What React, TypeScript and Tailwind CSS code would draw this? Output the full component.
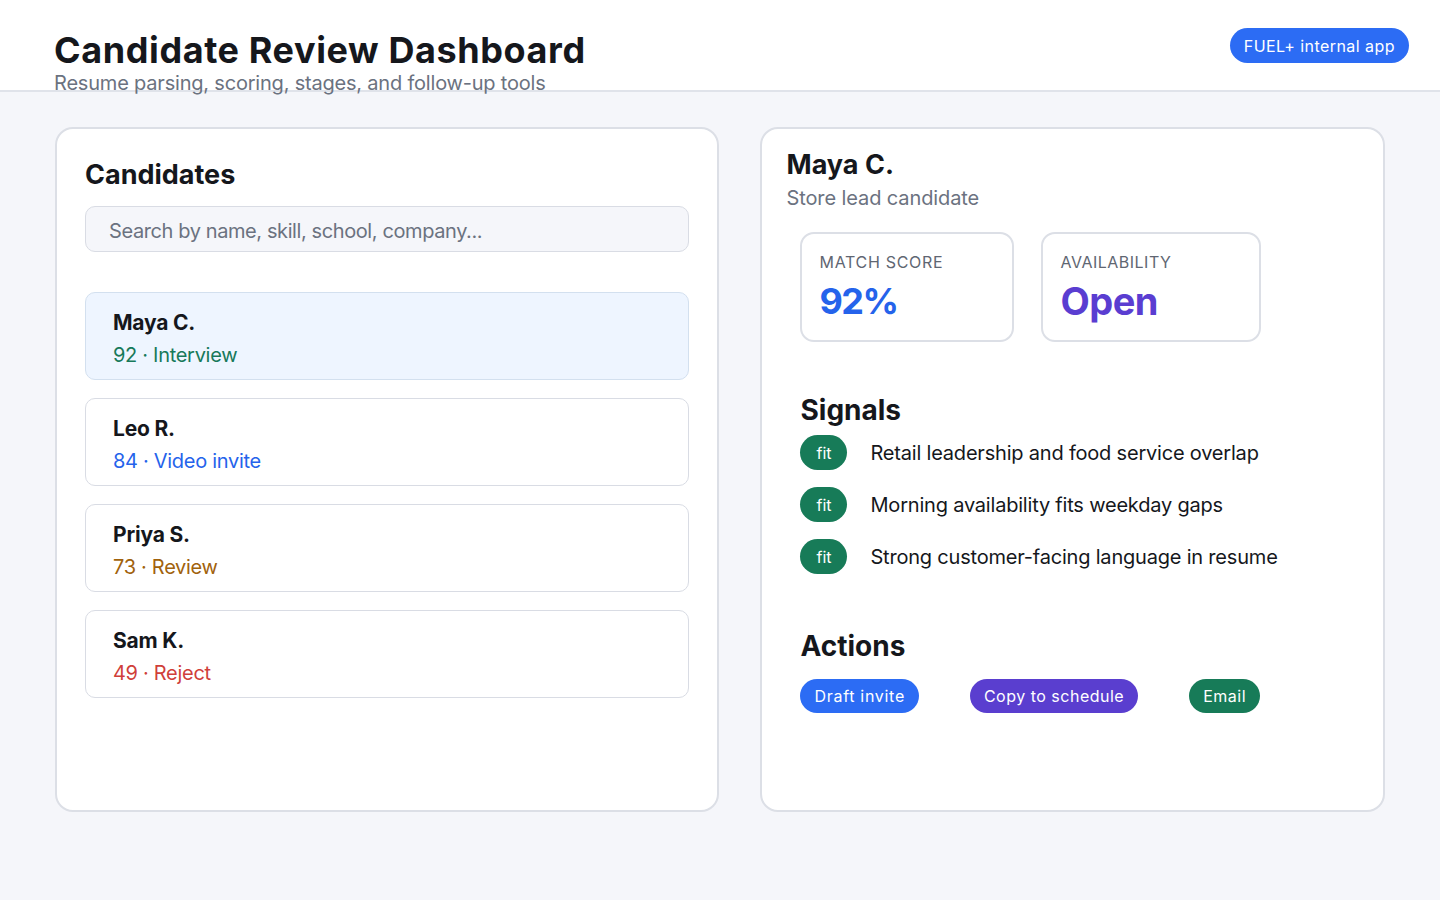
import React from "react";

const candidates = [
  { name: "Maya C.", line: "92 · Interview", color: "text-[#17795a]", selected: true },
  { name: "Leo R.", line: "84 · Video invite", color: "text-[#2563eb]", selected: false },
  { name: "Priya S.", line: "73 · Review", color: "text-[#a1620c]", selected: false },
  { name: "Sam K.", line: "49 · Reject", color: "text-[#d03f3a]", selected: false },
];

const signals = [
  "Retail leadership and food service overlap",
  "Morning availability fits weekday gaps",
  "Strong customer-facing language in resume",
];

export default function App() {
  return (
    <div className="min-h-screen bg-[#f5f6fa] text-[#15171c] font-['Inter','Liberation_Sans',sans-serif]">
      <header className="h-[92px] bg-white border-b-2 border-[#e0e3ea] px-[54px] flex justify-between items-start">
        <div className="pt-[30px]">
          <h1 className="text-[36px] leading-[40px] font-bold tracking-[0.6px]">Candidate Review Dashboard</h1>
          <p className="text-[20px] leading-[26px] text-[#6b7280] tracking-[-0.2px]">Resume parsing, scoring, stages, and follow-up tools</p>
        </div>
        <div className="mt-[28px] -mr-[23px] h-[35px] px-[14px] rounded-full bg-[#2c6cf4] text-white text-[16px] tracking-[0.45px] flex items-center">
          FUEL+ internal app
        </div>
      </header>

      <main className="px-[55px] pt-[35px] flex gap-[41px]">
        <section className="w-[665px] h-[685px] bg-white border-2 border-[#dcdfe6] rounded-[18px] px-[28px] pt-[28px]">
          <h2 className="text-[27px] leading-[36px] font-bold">Candidates</h2>
          <div className="mt-[13px] h-[46px] rounded-[10px] border border-[#d9dce4] bg-[#f5f6fa] px-[23px] pt-[4px] flex items-center text-[20px] text-[#6b7280] tracking-[-0.4px]">
            Search by name, skill, school, company...
          </div>
          <div className="mt-[40px] flex flex-col gap-[18px]">
            {candidates.map((c) => (
              <div
                key={c.name}
                className={
                  "h-[88px] rounded-[10px] border px-[27px] pt-[14px] " +
                  (c.selected ? "bg-[#eef5ff] border-[#d3e0ef]" : "bg-white border-[#d9dce4]")
                }
              >
                <div className="text-[21px] leading-[32px] font-bold tracking-[-0.2px]">{c.name}</div>
                <div className={"text-[20px] leading-[32px] tracking-[-0.3px] " + c.color}>{c.line}</div>
              </div>
            ))}
          </div>
        </section>

        <section className="w-[625px] h-[685px] bg-white border-2 border-[#dcdfe6] rounded-[18px] px-[24px] pt-[19px]">
          <h2 className="text-[27px] leading-[34px] font-bold">Maya C.</h2>
          <p className="mt-[3px] text-[20px] leading-[26px] text-[#6b7280] tracking-[-0.1px]">Store lead candidate</p>

          <div className="px-[14px]">
            <div className="mt-[21px] flex gap-[27px]">
              <div className="w-[214px] h-[110px] border-2 border-[#dcdfe6] rounded-[14px] px-[17px] pt-[17px]">
                <div className="text-[16px] leading-[22px] text-[#5f6672] uppercase tracking-[0.7px]">Match score</div>
                <div className="mt-[6px] text-[36px] leading-[44px] font-bold text-[#2563eb] tracking-[-1.5px]">92%</div>
              </div>
              <div className="w-[220px] h-[110px] border-2 border-[#dcdfe6] rounded-[14px] px-[17px] pt-[17px]">
                <div className="text-[16px] leading-[22px] text-[#5f6672] uppercase tracking-[0.5px]">Availability</div>
                <div className="mt-[6px] text-[38px] leading-[44px] font-bold text-[#5a3dd1] tracking-[-0.5px]">Open</div>
              </div>
            </div>

            <h3 className="mt-[51px] text-[28px] leading-[34px] font-bold">Signals</h3>
            <div className="mt-[8px] flex flex-col gap-[17px]">
              {signals.map((s) => (
                <div key={s} className="flex items-center gap-[23px]">
                  <span className="w-[47px] h-[35px] rounded-full bg-[#177b58] text-white text-[16px] flex items-center justify-center">
                    fit
                  </span>
                  <span className="text-[20px] leading-[26px] tracking-[-0.2px]">{s}</span>
                </div>
              ))}
            </div>

            <h3 className="mt-[55px] text-[28px] leading-[34px] font-bold">Actions</h3>
            <div className="mt-[16px] flex gap-[51px]">
              <button className="h-[34px] px-[14px] rounded-full bg-[#2c6cf4] text-white text-[16px] tracking-[0.7px]">Draft invite</button>
              <button className="h-[34px] px-[14px] rounded-full bg-[#5a3ecf] text-white text-[16px] tracking-[0.5px]">Copy to schedule</button>
              <button className="h-[34px] px-[14px] rounded-full bg-[#177b58] text-white text-[16px] tracking-[0.5px]">Email</button>
            </div>
          </div>
        </section>
      </main>
    </div>
  );
}
